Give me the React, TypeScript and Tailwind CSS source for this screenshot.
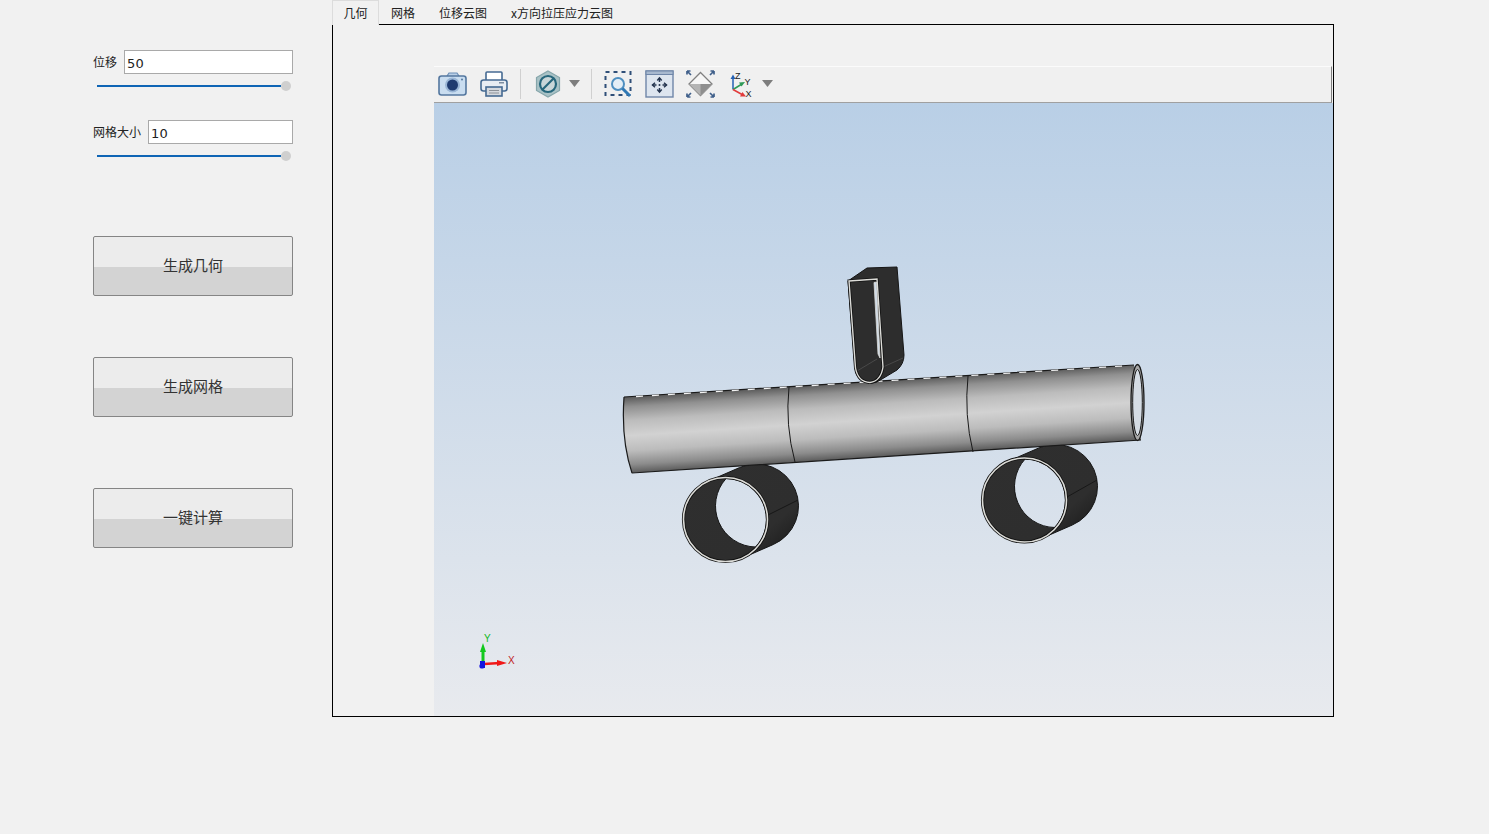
const uiFont = '"Noto Sans CJK SC", "Liberation Sans", sans-serif';

const Caret = ({ className }: { className: string }) => (
  <svg width="11" height="7" viewBox="0 0 11 7" className={className}>
    <polygon points="0,0 11,0 5.5,7" fill="#7d7d7d" />
  </svg>
);

const Separator = ({ className }: { className: string }) => (
  <div className={`h-[30px] w-px bg-[#d0d0d0] ${className}`} />
);

const CameraIcon = () => (
  <svg width="30" height="28" viewBox="0 0 30 28" className="ml-[4px]">
    <path d="M9 6 L11 3 H19 L21 6" fill="#b9cfe6" stroke="#6b8db5" strokeWidth="1.2" />
    <rect x="1" y="6" width="27" height="19" rx="2.5" fill="#c9ddf0" stroke="#54779f" strokeWidth="1.6" />
    <circle cx="14.5" cy="15" r="7.5" fill="#9ab6d6" />
    <circle cx="14.5" cy="15" r="5.5" fill="#1f3b70" />
    <circle cx="24" cy="9.5" r="1" fill="#54779f" />
  </svg>
);

const PrinterIcon = () => (
  <svg width="30" height="28" viewBox="0 0 30 28" className="ml-[11px]">
    <rect x="7" y="2" width="16" height="9" rx="1" fill="#fff" stroke="#456a92" strokeWidth="1.6" />
    <rect x="2" y="10" width="26" height="11" rx="2.5" fill="#e8edf3" stroke="#456a92" strokeWidth="1.6" />
    <rect x="20" y="12" width="5" height="1.5" fill="#7c8da0" />
    <rect x="7" y="17" width="16" height="9" fill="#d5d9de" stroke="#456a92" strokeWidth="1.6" />
    <path d="M10 20.5 H20 M10 23 H20" stroke="#8c9198" strokeWidth="1" />
  </svg>
);

const HexIcon = () => (
  <svg width="26" height="28" viewBox="0 0 26 28" className="ml-[14px]">
    <polygon points="13,1 24.5,7.5 24.5,20.5 13,27 1.5,20.5 1.5,7.5" fill="#a9c2c6" stroke="#86a6ab" strokeWidth="1.2" />
    <circle cx="13" cy="14" r="8" fill="#c9d6d8" stroke="#27677c" strokeWidth="2.2" />
    <line x1="7.5" y1="19.5" x2="18.5" y2="8.5" stroke="#27677c" strokeWidth="2.2" />
  </svg>
);

const ZoomBoxIcon = () => (
  <svg width="29" height="28" viewBox="0 0 29 28" className="ml-[12px]">
    <rect x="1.5" y="2" width="25" height="23" fill="none" stroke="#2f4f78" strokeWidth="2" strokeDasharray="4 4" />
    <circle cx="14" cy="14" r="6" fill="#e4eef6" stroke="#4f8fc0" strokeWidth="2" />
    <line x1="18.5" y1="18.5" x2="26" y2="26" stroke="#2f78b4" strokeWidth="3" />
  </svg>
);

const FitIcon = () => (
  <svg width="29" height="28" viewBox="0 0 29 28" className="ml-[12px]">
    <rect x="1" y="1" width="27" height="26" fill="#dde5ef" stroke="#6f86a8" strokeWidth="1.4" />
    <rect x="1" y="1" width="27" height="3.5" fill="#a8b9cf" stroke="#6f86a8" strokeWidth="1" />
    <path d="M14.5 8 V12 M14.5 18 V22 M7.5 15 H11.5 M17.5 15 H21.5" stroke="#25354f" strokeWidth="1.5" />
    <path d="M12.3 10.5 L14.5 8 L16.7 10.5 M12.3 19.5 L14.5 22 L16.7 19.5 M10 12.8 L7.5 15 L10 17.2 M19 12.8 L21.5 15 L19 17.2" fill="none" stroke="#25354f" strokeWidth="1.5" />
    <circle cx="14.5" cy="15" r="1" fill="#25354f" />
  </svg>
);

const IsoIcon = () => (
  <svg width="29" height="28" viewBox="0 0 29 28" className="ml-[12px]">
    <polygon points="14.5,2.5 26,14 14.5,25.5 3,14" fill="#f6f6f6" stroke="#808080" strokeWidth="1.3" />
    <polygon points="14.5,14 26,14 14.5,25.5 3,14" fill="#b4b4b4" />
    <polygon points="14.5,14 26,14 14.5,25.5" fill="#8e8e8e" />
    <path d="M1 1 L5 5 M1 1 H4.5 M1 1 V4.5 M28 1 L24 5 M28 1 H24.5 M28 1 V4.5 M1 27 L5 23 M1 27 H4.5 M1 27 V23.5 M28 27 L24 23 M28 27 H24.5 M28 27 V23.5" fill="none" stroke="#3f5f8a" strokeWidth="1.7" />
  </svg>
);

const TriadIcon = () => (
  <svg width="28" height="28" viewBox="0 0 28 28" className="ml-[14px]" fontFamily="Liberation Sans, sans-serif">
    <line x1="4" y1="19.5" x2="4" y2="8" stroke="#2461b4" strokeWidth="1.5" />
    <polygon points="4,4.5 1.5,9 6.5,9" fill="#2461b4" />
    <line x1="4" y1="19.5" x2="13" y2="14" stroke="#2f9a57" strokeWidth="1.5" />
    <polygon points="16,12 10,12.5 12.5,16.5" fill="#2f9a57" />
    <line x1="4" y1="19.5" x2="14" y2="25" stroke="#e23b3b" strokeWidth="1.5" />
    <polygon points="17,26.5 11,26.5 13.5,22" fill="#e23b3b" />
    <text x="6" y="9" fontSize="9" fill="#222">Z</text>
    <text x="15.5" y="15" fontSize="9" fill="#222">Y</text>
    <text x="16.5" y="26.5" fontSize="9" fill="#222">X</text>
  </svg>
);

type RingProps = {
  hull: string;
  hole: string;
  cx: number;
  cy: number;
  seam: [number, number, number, number];
};

const Ring = ({ hull, hole, cx, cy, seam }: RingProps) => (
  <g>
    <path d={`${hull} ${hole}`} fillRule="evenodd" fill="url(#ringShade)" stroke="#151515" strokeWidth="1" />
    <line x1={seam[0]} y1={seam[1]} x2={seam[2]} y2={seam[3]} stroke="#111" strokeWidth="0.8" />
    <circle cx={cx} cy={cy} r="42" fill="none" stroke="#111" strokeWidth="3.2" />
    <circle cx={cx} cy={cy} r="42" fill="none" stroke="#dcdcd8" strokeWidth="1.6" />
  </g>
);

const Scene = () => (
  <svg viewBox="434 103 899 613" className="block h-[613px] w-[899px]">
    <defs>
      <linearGradient id="tubeShade" gradientUnits="userSpaceOnUse" x1="880" y1="381" x2="885" y2="457">
        <stop offset="0" stopColor="#5c5c5c" />
        <stop offset="0.12" stopColor="#909090" />
        <stop offset="0.3" stopColor="#bcbcbc" />
        <stop offset="0.5" stopColor="#d2d2d2" />
        <stop offset="0.7" stopColor="#bcbcbc" />
        <stop offset="0.88" stopColor="#8c8c8c" />
        <stop offset="1" stopColor="#585858" />
      </linearGradient>
      <linearGradient id="ringShade" x1="0" y1="0" x2="1" y2="1">
        <stop offset="0" stopColor="#2f2f2f" />
        <stop offset="0.7" stopColor="#2e2e2e" />
        <stop offset="1" stopColor="#141414" />
      </linearGradient>
    </defs>

    <Ring
      hull="M708.7 481 L739.7 467.5 A42 42 0 0 1 773.3 544.5 L742.3 558 A42 42 0 0 1 708.7 481 Z"
      hole="M726.1 478.5 A41 41 0 0 1 755.9 547 A41 41 0 0 1 726.1 478.5 Z"
      cx={725.5}
      cy={519.5}
      seam={[768, 515, 798, 500]}
    />
    <Ring
      hull="M1007.7 461.5 L1038.7 448 A42 42 0 0 1 1072.3 525 L1041.3 538.5 A42 42 0 0 1 1007.7 461.5 Z"
      hole="M1025.1 459 A41 41 0 0 1 1054.9 527.5 A41 41 0 0 1 1025.1 459 Z"
      cx={1024.5}
      cy={500}
      seam={[1067, 497, 1097, 480]}
    />

    <path d="M624 397 L1134 365 L1141 440 L632 473 Q621 440 624 397 Z" fill="url(#tubeShade)" />
    <path d="M624 397 L1134 365 M632 473 L1141 440 M624 397 Q621 440 632 473" fill="none" stroke="#1a1a1a" strokeWidth="1.2" />
    <line x1="636" y1="396.6" x2="1130" y2="365.6" stroke="#f2f2f2" strokeWidth="1.1" strokeDasharray="7 9" />
    <path d="M789 387 Q785 425 795 462" fill="none" stroke="#1a1a1a" strokeWidth="1" />
    <path d="M968 376 Q964 415 973 452" fill="none" stroke="#1a1a1a" strokeWidth="1" />
    <ellipse cx="1137.5" cy="402.5" rx="6.5" ry="38" fill="#a8a8a8" stroke="#1a1a1a" strokeWidth="1.3" />
    <ellipse cx="1137.5" cy="402.5" rx="4.8" ry="33" fill="#d5dce4" stroke="#1a1a1a" strokeWidth="1" />

    <path
      d="M848 281 L867 268 L897 267 L904 355 Q904 364 897 370 L882 379 Q876 384 869 383 Q856 381 855 368 Z"
      fill="#2d2d2d"
      stroke="#151515"
      strokeWidth="1"
    />
    <line x1="857" y1="371" x2="877" y2="359" stroke="#555" strokeWidth="0.7" />
    <line x1="883" y1="367" x2="903" y2="358" stroke="#555" strokeWidth="0.7" />
    <path d="M849 281 L877 279 L883 367 Q881 381 870 382.5 Q858 382 855.5 368 Z" fill="none" stroke="#111" strokeWidth="3" />
    <path d="M849 281 L877 279 L883 367 Q881 381 870 382.5 Q858 382 855.5 368 Z" fill="none" stroke="#dcdcd8" strokeWidth="1.4" />
    <path d="M874 282.5 L876.5 282 L880 358 L878 354 Z" fill="#cfdbe8" stroke="#dcdcd8" strokeWidth="0.8" />

    <line x1="483" y1="664" x2="483" y2="650" stroke="#12c91e" strokeWidth="3" />
    <polygon points="483,643 480,652 486,652" fill="#12c91e" />
    <line x1="484" y1="664" x2="500" y2="663" stroke="#f01818" strokeWidth="2.6" />
    <polygon points="507,663 497,660 497,666" fill="#f01818" />
    <rect x="480" y="661" width="5" height="7" fill="#1414e0" />
    <circle cx="482" cy="666" r="2.6" fill="#1414e0" />
    <text x="484" y="642" fontSize="10" fill="#12b81c" fontFamily="Liberation Sans, sans-serif">Y</text>
    <text x="508" y="664" fontSize="10" fill="#c02222" fontFamily="Liberation Sans, sans-serif">X</text>
  </svg>
);

const Field = ({ label, value, gap }: { label: string; value: string; gap: string }) => (
  <div>
    <div className="flex h-[24px] items-center">
      <span className={`text-[12px] text-[#222] ${gap}`}>{label}</span>
      <div className="flex h-[24px] flex-1 items-center border border-[#a9a9a9] bg-white pl-[2px] pt-[3px] font-['DejaVu_Sans'] text-[13px] tracking-[0.3px] text-[#222]">
        {value}
      </div>
    </div>
    <div className="mt-[7px] flex items-center pl-[4px] pr-[2px]">
      <div className="h-[2px] flex-1 bg-[#0f65b5]" />
      <div className="h-[10px] w-[10px] rounded-full bg-[#cfcfcf]" />
    </div>
  </div>
);

const ActionButton = ({ label, className }: { label: string; className: string }) => (
  <button
    className={`block h-[60px] w-[200px] rounded-[2px] border border-[#858585] bg-[linear-gradient(to_bottom,#ececec_0%,#ececec_51%,#d3d3d3_51%,#d3d3d3_100%)] pb-px text-[15px] text-[#333] ${className}`}
  >
    {label}
  </button>
);

export default function App() {
  return (
    <div className="flex h-[834px] w-full bg-[#f1f1f1]" style={{ fontFamily: uiFont }}>
      <aside className="w-[332px] pl-[93px] pr-[39px] pt-[50px]">
        <Field label="位移" value="50" gap="mr-[6px] w-[25px]" />
        <div className="mt-[29px]">
          <Field label="网格大小" value="10" gap="mr-[6px] w-[49px]" />
        </div>
        <ActionButton label="生成几何" className="mt-[75px]" />
        <ActionButton label="生成网格" className="mt-[61px]" />
        <ActionButton label="一键计算" className="mt-[71px]" />
      </aside>

      <main className="w-[1002px]">
        <div className="relative z-10 flex h-[25px] items-end text-[12px] text-[#222]">
          <div className="flex h-[25px] w-[47px] items-center justify-center border-x border-t border-[#dcdcdc] bg-[#f1f1f1]">几何</div>
          <div className="flex h-[25px] items-center px-[12px]">网格</div>
          <div className="flex h-[25px] items-center px-[12px]">位移云图</div>
          <div className="flex h-[25px] items-center px-[12px]">x方向拉压应力云图</div>
        </div>
        <div className="-mt-px h-[693px] border border-black pl-[101px] pt-[41px]">
          <div className="mr-px flex h-[37px] items-center border-b border-r border-t border-b-[#a0a0a0] border-r-[#808080] border-t-[#fbfbfb] bg-[#f0f0f0] pb-[2px]">
            <CameraIcon />
            <PrinterIcon />
            <Separator className="ml-[11px]" />
            <HexIcon />
            <Caret className="ml-[8px]" />
            <Separator className="ml-[11px]" />
            <ZoomBoxIcon />
            <FitIcon />
            <IsoIcon />
            <TriadIcon />
            <Caret className="ml-[5px]" />
          </div>
          <div className="h-[613px] w-[899px] bg-[linear-gradient(to_bottom,#b9cfe6,#e8eaee)]">
            <Scene />
          </div>
        </div>
      </main>
    </div>
  );
}
